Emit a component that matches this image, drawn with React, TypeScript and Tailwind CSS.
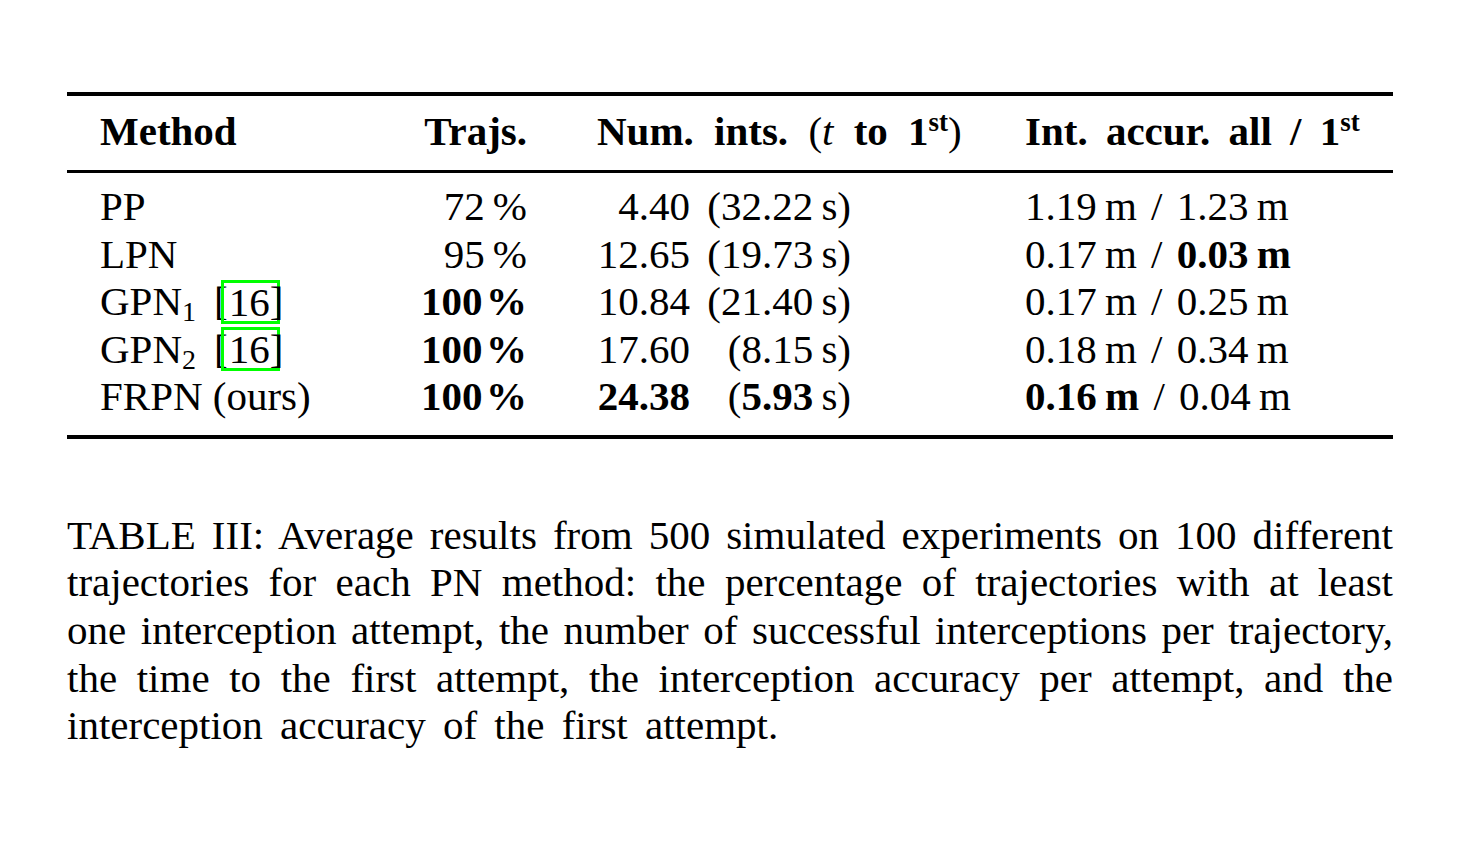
import { FC, ReactNode } from 'react';

type Row = {
  method: ReactNode;
  trajs: ReactNode;
  num: ReactNode;
  time: ReactNode;
  acc: ReactNode;
};

const Cite: FC = () => (
  <span className="ml-[18px] inline-flex items-center">
    <span className="-mr-[7px]">[</span>
    <span className="border-[3px] border-[#00ff00] h-[44px] leading-[38px] pl-[5px] pr-[7px]">16</span>
    <span className="-ml-[10px]">]</span>
  </span>
);

const Slash: FC = () => <span className="px-[4px]">/</span>;

const Sub: FC<{ n: string }> = ({ n }) => (
  <sub className="text-[28px] relative top-[6px] align-baseline">{n}</sub>
);

const Sup: FC = () => (
  <sup className="text-[27px] relative -top-[14px] align-baseline">st</sup>
);

const rows: Row[] = [
  {
    method: 'PP',
    trajs: '72\u2009%',
    num: '4.40',
    time: '(32.22\u2009s)',
    acc: (
      <>
        1.19&#8201;m <Slash /> 1.23&#8201;m
      </>
    ),
  },
  {
    method: 'LPN',
    trajs: '95\u2009%',
    num: '12.65',
    time: '(19.73\u2009s)',
    acc: (
      <>
        0.17&#8201;m <Slash /> <b>0.03&#8201;m</b>
      </>
    ),
  },
  {
    method: (
      <>
        GPN<Sub n="1" />
        <Cite />
      </>
    ),
    trajs: <b>100&#8202;%</b>,
    num: '10.84',
    time: '(21.40\u2009s)',
    acc: (
      <>
        0.17&#8201;m <Slash /> 0.25&#8201;m
      </>
    ),
  },
  {
    method: (
      <>
        GPN<Sub n="2" />
        <Cite />
      </>
    ),
    trajs: <b>100&#8202;%</b>,
    num: '17.60',
    time: '(8.15\u2009s)',
    acc: (
      <>
        0.18&#8201;m <Slash /> 0.34&#8201;m
      </>
    ),
  },
  {
    method: 'FRPN (ours)',
    trajs: <b>100&#8202;%</b>,
    num: <b>24.38</b>,
    time: (
      <>
        (<b>5.93</b>&#8201;s)
      </>
    ),
    acc: (
      <>
        <b>0.16&#8201;m</b> <Slash /> 0.04&#8201;m
      </>
    ),
  },
];

const caption = [
  'TABLE III: Average results from 500 simulated experiments on 100 different',
  'trajectories for each PN method: the percentage of trajectories with at least',
  'one interception attempt, the number of successful interceptions per trajectory,',
  'the time to the first attempt, the interception accuracy per attempt, and the',
];

const grid = 'grid grid-cols-[333px_127px_163px_161px_1fr] items-center';

export default function App() {
  return (
    <div
      className="w-[1480px] h-[850px] bg-white text-black pt-[92px] pl-[67px] pr-[87px]"
      style={{ fontFamily: '"Liberation Serif", "Times New Roman", serif' }}
    >
      <div className="text-[41px] leading-[47.5px]">
        <div className="border-t-[4px] border-black" />
        <div className={`${grid} font-bold h-[74px] pb-[3px] [word-spacing:8px]`}>
          <div className="pl-[33px]">Method</div>
          <div className="text-right [word-spacing:0px]">Trajs.</div>
          <div className="col-span-2 pl-[70px] whitespace-nowrap [word-spacing:10px]">
            Num. ints. <span className="font-normal">(</span>
            <span className="font-normal italic">t</span> to 1<Sup />
            <span className="font-normal">)</span>
          </div>
          <div className="pl-[174px] whitespace-nowrap">
            Int. accur. all / 1<Sup />
          </div>
        </div>
        <div className="border-t-[3px] border-black" />
        <div className="pt-[10px] pb-[14px]">
          {rows.map((r, i) => (
            <div key={i} className={`${grid} h-[47.5px]`}>
              <div className="pl-[33px] whitespace-nowrap">{r.method}</div>
              <div className="text-right whitespace-nowrap">{r.trajs}</div>
              <div className="text-right whitespace-nowrap">{r.num}</div>
              <div className="text-right whitespace-nowrap">{r.time}</div>
              <div className="pl-[174px] whitespace-nowrap">{r.acc}</div>
            </div>
          ))}
        </div>
        <div className="border-t-[4px] border-black" />
      </div>

      <div className="mt-[73px] text-[41px] leading-[47.7px]">
        {caption.map((line) => (
          <p key={line} className="whitespace-nowrap text-justify [text-align-last:justify]">
            {line}
          </p>
        ))}
        <p className="whitespace-nowrap [word-spacing:7px]">
          interception accuracy of the first attempt.
        </p>
      </div>
    </div>
  );
}
